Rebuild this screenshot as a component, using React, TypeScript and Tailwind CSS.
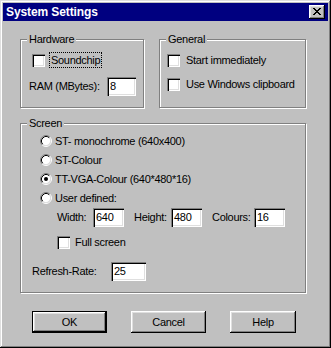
import React from 'react';

const raised =
  'shadow-[inset_-1px_-1px_0_#000,inset_1px_1px_0_#fff,inset_-2px_-2px_0_#808080,inset_2px_2px_0_#dfdfdf]';
const sunken =
  'shadow-[inset_1px_1px_0_#808080,inset_2px_2px_0_#000,inset_-1px_-1px_0_#fff,inset_-2px_-2px_0_#dfdfdf]';

const Group: React.FC<{ label: string; className: string; children: React.ReactNode }> = ({ label, className, children }) => (
    <div className={`relative shrink-0 border border-[#808080] shadow-[1px_1px_0_#fff,inset_1px_1px_0_#fff] ${className}`}>
        {/* caption sits over the etched line */}
        <span className="absolute -top-[8px] left-[6px] px-[2px] bg-[#c0c0c0] leading-[14px]">{label}</span>
        {children}
    </div>
);

const Check: React.FC = () => <span className={`block w-[13px] h-[13px] shrink-0 bg-white ${sunken}`} />;

const Radio: React.FC<{ checked?: boolean }> = ({ checked }) => (
    <svg width="12" height="12" viewBox="0 0 12 12" className="shrink-0">
        <circle cx="6" cy="6" r="4.5" fill="#fff" />
        <path d="M2.11 9.89 A5.5 5.5 0 0 1 9.89 2.11" fill="none" stroke="#808080" />
        <path d="M9.89 2.11 A5.5 5.5 0 0 1 2.11 9.89" fill="none" stroke="#fff" />
        <path d="M2.82 9.18 A4.5 4.5 0 0 1 9.18 2.82" fill="none" stroke="#000" />
        <path d="M9.18 2.82 A4.5 4.5 0 0 1 2.82 9.18" fill="none" stroke="#dfdfdf" />
        {checked && <circle cx="6" cy="6" r="2" fill="#000" />}
    </svg>
);

const Field: React.FC<{ value: string; w: string }> = ({ value, w }) => (
    <div className={`${w} h-[19px] shrink-0 bg-white pl-[3px] flex items-center ${sunken}`}>{value}</div>
);

const Button: React.FC<{ label: string; w: string; isDefault?: boolean }> = ({ label, w, isDefault }) => (
    <div className={`${w} h-[22px] ${isDefault ? 'border border-black' : ''}`}>
        <div className={`h-full flex items-center justify-center ${raised}`}>{label}</div>
    </div>
);

const App: React.FC = () => {
    const radios = [
        { label: 'ST- monochrome (640x400)' },
        { label: 'ST-Colour' },
        { label: 'TT-VGA-Colour (640*480*16)', checked: true },
        { label: 'User defined:' },
    ];

    return (
        <div className="w-[331px] h-[348px] bg-[#c0c0c0] p-[3px] text-black text-[11px] leading-[13px] tracking-[-0.3px] font-['Liberation_Sans',Arial,sans-serif] shadow-[inset_-1px_-1px_0_#000,inset_1px_1px_0_#dfdfdf,inset_-2px_-2px_0_#808080,inset_2px_2px_0_#fff]">
            {/* TITLE BAR */}
            <div className="h-[18px] bg-[#000080] flex items-center justify-between pl-[3px] pr-[3px]">
                <span className="text-white font-bold text-[12px] tracking-[-0.1px]">System Settings</span>
                <div className={`w-[16px] h-[14px] bg-[#c0c0c0] flex items-center justify-center ${raised}`}>
                    <svg width="8" height="7" viewBox="0 0 8 7" shapeRendering="crispEdges" className="-mt-[1px]">
                        <path
                            d="M0 0h2v1H0zM6 0h2v1H6zM1 1h2v1H1zM5 1h2v1H5zM2 2h4v1H2zM3 3h2v1H3zM2 4h4v1H2zM1 5h2v1H1zM5 5h2v1H5zM0 6h2v1H0zM6 6h2v1H6z"
                            fill="#000"
                        />
                    </svg>
                </div>
            </div>

            <div className="px-[17px]">
                <div className="mt-[18px] flex gap-[15px]">
                    <Group label="Hardware" className="w-[124px] h-[69px]">
                        <div className="mt-[12px] h-[16px] pl-[11px] flex items-center">
                            <Check />
                            <span className="ml-[4px] px-[1px] border border-dotted border-black leading-[14px]">Soundchip</span>
                        </div>
                        <div className="mt-[9px] h-[19px] pl-[8px] flex items-center">
                            <span className="w-[78px] shrink-0">RAM (MBytes):</span>
                            <Field value="8" w="w-[29px]" />
                        </div>
                    </Group>

                    <Group label="General" className="w-[147px] h-[69px]">
                        <div className="mt-[12px] h-[16px] pl-[7px] flex items-center">
                            <Check />
                            <span className="ml-[6px]">Start immediately</span>
                        </div>
                        <div className="mt-[8px] h-[16px] pl-[7px] flex items-center">
                            <Check />
                            <span className="ml-[6px] whitespace-nowrap">Use Windows clipboard</span>
                        </div>
                    </Group>
                </div>

                <Group label="Screen" className="mt-[15px] w-[286px] h-[170px]">
                    <div className="mt-[9px] pl-[19px] flex flex-col gap-[3px]">
                        {radios.map((r) => (
                            <div key={r.label} className="h-[16px] flex items-center">
                                <Radio checked={r.checked} />
                                <span className="ml-[3px]">{r.label}</span>
                            </div>
                        ))}
                    </div>
                    <div className="mt-[2px] h-[19px] pl-[36px] flex items-center">
                        <span className="w-[36px] shrink-0">Width:</span>
                        <Field value="640" w="w-[31px]" />
                        <span className="ml-[10px] w-[37px] shrink-0">Height:</span>
                        <Field value="480" w="w-[31px]" />
                        <span className="ml-[10px] w-[42px] shrink-0">Colours:</span>
                        <Field value="16" w="w-[31px]" />
                    </div>
                    <div className="mt-[7px] h-[16px] pl-[36px] flex items-center">
                        <Check />
                        <span className="ml-[5px]">Full screen</span>
                    </div>
                    <div className="mt-[12px] h-[19px] pl-[11px] flex items-center">
                        <span className="w-[79px] shrink-0">Refresh-Rate:</span>
                        <Field value="25" w="w-[35px]" />
                    </div>
                </Group>

                {/* BUTTONS */}
                <div className="mt-[18px] ml-[12px] flex gap-[24px]">
                    <Button label="OK" w="w-[75px]" isDefault />
                    <Button label="Cancel" w="w-[75px]" />
                    <Button label="Help" w="w-[66px]" />
                </div>
            </div>
        </div>
    );
};

export default App;
